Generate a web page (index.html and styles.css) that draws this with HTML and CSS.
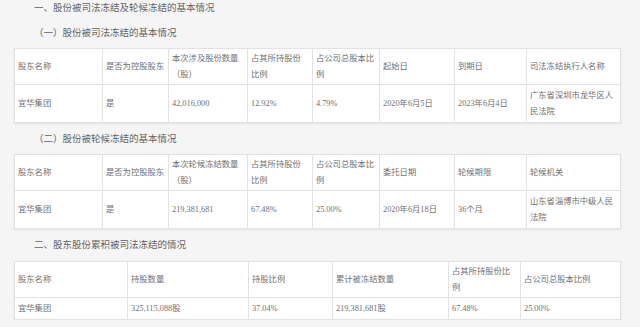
FILE: index.html
```html
<!DOCTYPE html>
<html lang="zh-CN">
<head>
<meta charset="utf-8">
<link rel="stylesheet" href="styles.css">
</head>
<body>
<div class="page">
  <p class="h1">一、股份被司法冻结及轮候冻结的基本情况</p>
  <p class="h2">（一）股份被司法冻结的基本情况</p>
  <table class="grid g8">
    <colgroup><col><col><col><col><col><col><col><col></colgroup>
    <thead>
      <tr><th>股东名称</th><th>是否为控股股东</th><th>本次涉及股份数量（股）</th><th>占其所持股份比例</th><th>占公司总股本比例</th><th>起始日</th><th>到期日</th><th>司法冻结执行人名称</th></tr>
    </thead>
    <tbody>
      <tr><td>宜华集团</td><td>是</td><td>42,016,000</td><td>12.92%</td><td>4.79%</td><td>2020年6月5日</td><td>2023年6月4日</td><td>广东省深圳市龙华区人民法院</td></tr>
    </tbody>
  </table>
  <p class="h2">（二）股份被轮候冻结的基本情况</p>
  <table class="grid g8">
    <colgroup><col><col><col><col><col><col><col><col></colgroup>
    <thead>
      <tr><th>股东名称</th><th>是否为控股股东</th><th>本次轮候冻结数量（股）</th><th>占其所持股份比例</th><th>占公司总股本比例</th><th>委托日期</th><th>轮候期限</th><th>轮候机关</th></tr>
    </thead>
    <tbody>
      <tr><td>宜华集团</td><td>是</td><td>219,381,681</td><td>67.48%</td><td>25.00%</td><td>2020年6月18日</td><td>36个月</td><td>山东省淄博市中级人民法院</td></tr>
    </tbody>
  </table>
  <p class="h2 sec">二、股东股份累积被司法冻结的情况</p>
  <table class="grid g6">
    <colgroup><col><col><col><col><col><col></colgroup>
    <thead>
      <tr><th>股东名称</th><th>持股数量</th><th>持股比例</th><th>累计被冻结数量</th><th>占其所持股份比例</th><th>占公司总股本比例</th></tr>
    </thead>
    <tbody>
      <tr><td>宜华集团</td><td>325,115,088股</td><td>37.04%</td><td>219,381,681股</td><td>67.48%</td><td>25.00%</td></tr>
    </tbody>
  </table>
</div>
</body>
</html>
```
FILE: styles.css
```css
html, body {
  margin: 0;
  padding: 0;
  background: #f5f5f5;
}
body {
  font-family: "Liberation Serif", "Noto Sans CJK SC", serif;
  color: #555;
}
.page {
  padding: 0 20px 0 14px;
}
.h1, .h2 {
  margin: 0;
  padding-left: 20px;
  font-family: "Noto Sans CJK SC", serif;
  font-size: 9.5px;
  color: #636363;
}
.h1 {
  line-height: 14px;
  margin-bottom: 10px;
}
.h2 {
  line-height: 16px;
  margin: 7px 0 8px;
}
.h2.sec {
  margin: 7px 0 9px;
}
.grid {
  width: 606px;
  table-layout: fixed;
  border-collapse: collapse;
  background: #fff;
  box-shadow: 0 1px 2px rgba(0, 0, 0, 0.08);
  font-size: 8.3px;
  line-height: 16px;
  color: #717171;
}
.grid th, .grid td {
  border: 1px solid #e2e2e2;
  text-align: left;
  font-weight: normal;
  vertical-align: middle;
  padding: 2px 3px 1px 3px;
  word-break: break-all;
}
.grid td {
  padding-top: 3px;
  padding-bottom: 2px;
}
.g8 col:nth-child(1) { width: 88px; }
.g8 col:nth-child(2) { width: 66px; }
.g8 col:nth-child(3) { width: 79px; }
.g8 col:nth-child(4) { width: 65px; }
.g8 col:nth-child(5) { width: 67px; }
.g8 col:nth-child(6) { width: 75px; }
.g8 col:nth-child(7) { width: 72px; }
.g8 col:nth-child(8) { width: 94px; }
.g6 col:nth-child(1) { width: 113px; }
.g6 col:nth-child(2) { width: 121px; }
.g6 col:nth-child(3) { width: 84px; }
.g6 col:nth-child(4) { width: 116px; }
.g6 col:nth-child(5) { width: 72px; }
.g6 col:nth-child(6) { width: 100px; }
```
